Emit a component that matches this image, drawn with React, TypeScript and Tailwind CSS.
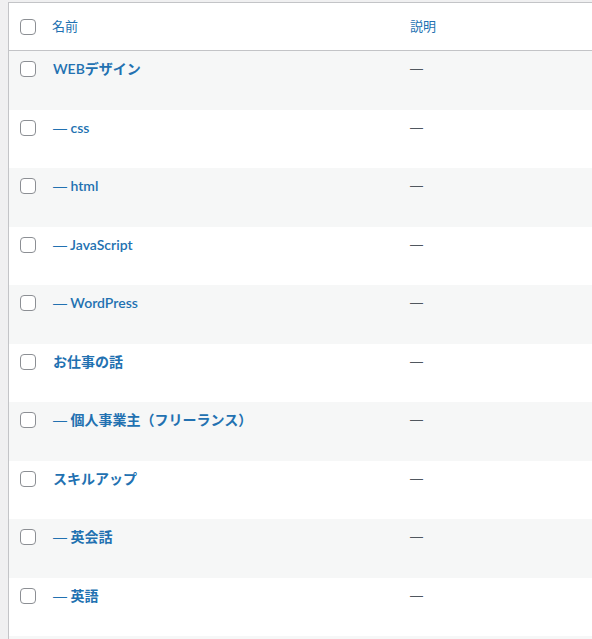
const rows = [
  { name: "WEBデザイン", child: false },
  { name: "css", child: true },
  { name: "html", child: true },
  { name: "JavaScript", child: true },
  { name: "WordPress", child: true },
  { name: "お仕事の話", child: false },
  { name: "個人事業主（フリーランス）", child: true },
  { name: "スキルアップ", child: false },
  { name: "英会話", child: true },
  { name: "英語", child: true },
];

function Checkbox() {
  return <span className="block w-4 h-4 rounded-[4px] border border-[#8c8f94] bg-white" />;
}

function Dash() {
  return <span className="font-['Liberation_Sans'] font-normal">—</span>;
}

export default function App() {
  return (
    <div
      className="w-[592px] h-[639px] overflow-hidden bg-[#f0f0f1] pt-[2px] pl-[8px]"
      style={{ fontFamily: '"Lato", "Noto Sans CJK JP", sans-serif' }}
    >
      <div className="w-[640px] border border-[#c3c4c7] bg-white">
        {/* header */}
        <div className="flex items-center h-[48px] border-b border-[#c3c4c7]">
          <div className="w-[35px]">
            <span className="block ml-[11px]"><Checkbox /></span>
          </div>
          <div className="w-[357px] pl-[8px] text-[13px] text-[#2271b1]">名前</div>
          <div className="pl-[9px] text-[13px] text-[#2271b1]">説明</div>
        </div>

        {rows.map((r, i) => (
          <div
            key={r.name}
            className={`flex items-start ${i % 2 === 0 ? "h-[59px] bg-[#f6f7f7]" : "h-[58px] bg-white"}`}
          >
            <div className="w-[35px] pt-[10px]">
              <span className="block ml-[11px]"><Checkbox /></span>
            </div>
            <div className="w-[357px] pl-[9px] pt-[7px] text-[14px] leading-[21px] font-semibold text-[#2271b1]">
              {r.child && <><Dash /> </>}{r.name}
            </div>
            <div className="pl-[9px] pt-[7px] text-[13px] leading-[21px] text-[#50575e]"><Dash /></div>
          </div>
        ))}
        {/* next row, cut off by the window */}
        <div className="h-[59px] bg-[#f6f7f7]" />
      </div>
    </div>
  );
}
